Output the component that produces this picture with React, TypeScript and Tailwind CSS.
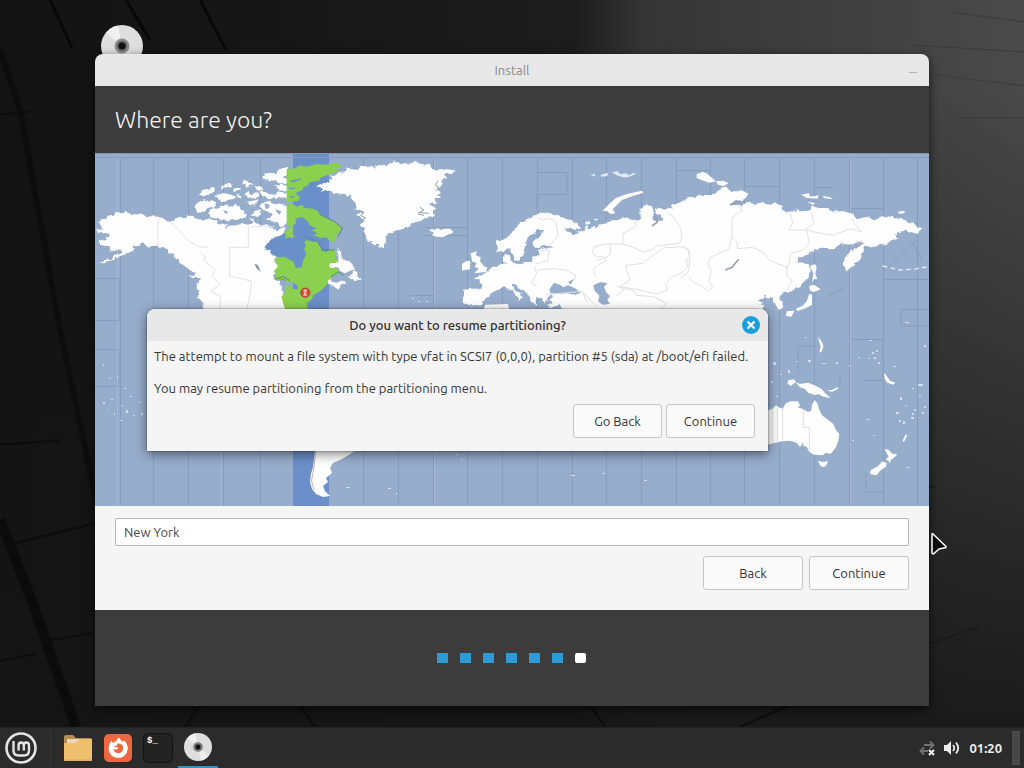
import React from "react";

const ZONE_LINES = [120, 153, 188, 223, 260, 363, 398, 433, 467, 502, 537, 572, 606, 641, 676, 710, 744, 779, 814, 849, 883, 917];

/* Small islands, as [x, y, width, height] */
const ISLANDS: number[][] = [
  [103, 364, 1, 2], [109, 378, 2, 1], [117, 376, 1, 2], [124, 388, 2, 1], [103, 402, 2, 2], [111, 399, 2, 1],
  [114, 413, 1, 2], [121, 405, 2, 1], [126, 410, 2, 3], [133, 415, 2, 1], [139, 401, 1, 2], [130, 396, 2, 1],
  [120, 420, 2, 1], [141, 413, 2, 2], [107, 409, 1, 1], [412, 298, 2, 1], [418, 301, 2, 1], [426, 301, 2, 1],
  [773, 362, 3, 3], [780, 374, 2, 1], [788, 370, 2, 3], [796, 361, 2, 1], [805, 337, 2, 1], [808, 360, 3, 2],
  [822, 363, 4, 1], [836, 362, 2, 2], [849, 365, 2, 1], [858, 357, 2, 1], [868, 358, 2, 1], [872, 352, 2, 2],
  [876, 350, 2, 2], [874, 357, 2, 2], [878, 362, 2, 2], [869, 340, 3, 1], [882, 361, 1, 1], [893, 366, 3, 1],
  [905, 322, 4, 1], [924, 345, 2, 2], [900, 397, 2, 3], [896, 412, 3, 2], [903, 421, 2, 3], [911, 417, 3, 2],
  [912, 413, 2, 2], [924, 406, 2, 2], [919, 395, 2, 1], [922, 412, 2, 2], [912, 388, 2, 1], [866, 419, 3, 1],
  [918, 384, 5, 2], [914, 409, 2, 2], [899, 420, 2, 2], [905, 405, 2, 1], [771, 381, 2, 2], [776, 396, 2, 1],
  [873, 435, 2, 1], [852, 440, 2, 1], [907, 467, 3, 1], [883, 467, 1, 1], [571, 475, 4, 1], [602, 473, 3, 1],
  [644, 480, 3, 1], [461, 459, 2, 1], [456, 454, 2, 1], [346, 487, 4, 1], [388, 488, 3, 1], [396, 493, 2, 1],
];

const CRUST = "#fefefe";
const SEA = "#97adcc";

function WorldMap() {
  return (
    <svg viewBox="95 153 834 353" className="block h-auto w-full" role="img" aria-label="Time zone map">
      <defs>
        <filter id="coast" x="-5%" y="-5%" width="110%" height="110%">
          <feTurbulence type="fractalNoise" baseFrequency=".06" numOctaves="2" seed="4" result="noise" />
          <feDisplacementMap in="SourceGraphic" in2="noise" scale="16" xChannelSelector="R" yChannelSelector="G" />
        </filter>
      </defs>
      <rect x="95" y="153" width="834" height="353" fill={SEA} />
      <rect x="293" y="153" width="36" height="353" fill="#6b8fc8" />
      <g stroke="#879dbd" strokeWidth="1" fill="none">
        {ZONE_LINES.map((x) => (
          <path key={x} d={`M${x + 0.5} 157V506`} />
        ))}
        <path d="M95 278.500H119V320.500H95M95 349.500H119V386.500H95M95 157.500H929M537 172.500H567V194.500H537V210M676 170.500H710M744 186.500H779M814 187.500H833M883 208.500H849M929 279.500H884M901 309.500H929M901 309V326H929M798 372V346H816M849 339.500H883V380.500H862M840 372V388M425 227.500H467M866 472V492H883M425 235.500H467M410 295.500H433M888 268L913 243L922 260M845 287L826 297" />
      </g>
      <g stroke="#a5b7d2" strokeWidth="1">
        <path d="M117.500 157V506M221.500 400V506M850.500 157V506M434.500 157V506" />
      </g>
      {/* North America */}
      <g transform="translate(95 150) scale(.33333)">
        <path fill="#6b8fc8" d="M598 270L560 245L548 262L520 272L510 295L530 310L550 320L545 350L540 385L600 400L650 380Z" />
        <g filter="url(#coast)">
          <path fill={CRUST} d="M4 235L26 238L18 222L12 212L32 208L40 198L60 192L70 186L84 190L88 182L110 192L140 194L160 199L190 200L206 208L225 214L242 206L256 200L270 206L280 196L292 202L312 204L322 212L345 206L370 214L368 222L400 220L388 234L412 228L440 222L460 228L475 216L490 224L510 222L526 230L548 244L566 232L572 240L560 256L540 262L520 272L512 288L512 300L528 304L530 316L545 320L540 340L550 345L546 362L534 376L540 392L555 395L558 410L562 430L570 440L575 455L575 495L330 495L325 460L312 445L312 425L305 412L308 395L318 385L302 384L280 372L298 376L300 365L282 360L270 345L256 340L250 326L242 328L235 312L222 308L215 296L200 295L180 286L160 290L145 280L130 288L112 290L120 296L100 312L78 316L60 330L36 334L10 342L30 330L56 324L66 312L82 303L60 300L45 304L40 288L15 286L14 274L45 262L44 254L35 250L8 248Z" />
          <path fill={CRUST} d="M298 170L306 158L328 150L350 152L364 160L356 172L340 172L330 184L310 188L306 178ZM310 136L330 118L352 114L364 122L350 130L336 138ZM362 142L370 128L390 130L416 138L422 146L396 150L380 154ZM345 178L370 172L392 164L412 170L424 160L440 178L456 196L444 208L420 206L400 214L370 208L346 202L340 190ZM386 104L404 98L410 104L396 112L378 118ZM438 94L460 94L478 106L458 108ZM446 128L458 120L466 136L480 126L492 132L488 144L460 146ZM452 152L468 154L490 150L488 162L470 168ZM478 112L500 110L508 120L490 122ZM500 78L520 68L540 70L556 56L578 54L582 72L560 82L582 88L580 102L552 100L540 92L522 90L510 84ZM540 108L560 104L582 110L582 120L556 122ZM496 124L516 122L520 132L540 134L552 126L582 128L584 144L556 146L542 142L520 148L500 138ZM500 158L520 152L534 162L560 164L582 172L584 192L576 224L556 232L548 216L526 214L512 206L532 200L524 188L508 182L490 170ZM476 184L496 178L502 192L484 200L470 196ZM424 132L438 136L434 146ZM414 116L434 112L440 120L422 124ZM458 206L480 206L476 214Z" />
        </g>
        <path fill={SEA} d="M508 160L524 164L522 174L512 178ZM400 186L384 180L392 192ZM540 178L560 184L552 194Z" />
        <path fill="none" stroke="#e2e2e5" strokeWidth="3" d="M189 206V288M225 214L250 240L280 272L312 290L340 292M318 310L330 320L328 332L360 360L352 380L376 402L346 424L376 438V480M460 230V292H404V378L440 386L470 394L466 430L454 480M464 230H540" />
        <path fill="#8c9399" d="M478 342L488 344L498 366L486 356Z" />
      </g>
      <g transform="translate(270 150) scale(.33333)">
        <path fill="#8bd04e" d="M50 56L72 56L90 46L110 50L140 42L168 44L200 38L218 50L198 58L208 64L180 72L150 84L148 92L120 96L112 108L100 112L98 120L75 130L90 140L86 152L50 155ZM50 168L64 158L80 170L96 164L104 174L130 176L145 184L150 195L166 198L180 210L196 216L216 232L208 246L200 254L198 272L186 276L168 262L152 264L130 256L142 250L125 240L140 236L120 226L112 212L95 200L76 206L78 220L68 228L60 222L70 238L66 250L76 260L60 262L44 266L48 254L42 248L60 235L50 218ZM20 322L44 320L60 330L70 334L78 355L95 352L100 330L110 312L102 298L108 286L102 276L112 270L128 276L140 274L150 288L156 302L170 306L180 296L192 298L200 308L196 324L206 336L176 344L200 354L210 372L192 376L180 388L170 405L152 422L130 436L126 448L110 460L116 490L50 490L40 462L34 440L45 430L44 412L58 404L66 416L84 418L82 406L66 396L50 398L44 386L30 388L10 388L18 378L12 362L24 350L16 336Z" />
        <path fill="#6b8fc8" d="M62 92L96 84L90 90L64 98ZM52 116L78 112L70 118ZM84 222L106 216L122 236L104 232ZM54 140L74 138L66 144Z" />
        <path fill="none" stroke="#587caa" strokeWidth="3" d="M150 193L192 214L218 234L204 260M14 388L40 380L60 392M106 260L142 274L158 300L194 300M184 380L205 366L220 376" />
        <g filter="url(#coast)">
          <path fill={CRUST} d="M200 300L206 298L214 310L214 324L232 334L246 344L256 358L240 362L225 370L212 364L204 352L180 350L176 344L204 338L206 322ZM234 380L246 374L250 364L262 370L262 378L272 392L260 392L248 388ZM172 388L186 384L190 396L202 398L218 390L226 398L214 406L204 416L188 412L176 402Z" />
          <path fill={CRUST} d="M138 108L160 100L182 96L172 88L190 82L176 78L210 66L222 68L230 54L262 56L280 48L312 52L330 42L352 46L372 34L400 40L436 36L450 44L480 48L500 62L530 58L556 62L544 70L525 72L530 84L512 90L520 104L500 114L516 124L500 134L512 146L488 148L506 156L480 164L496 176L490 186L496 196L470 204L450 214L432 218L410 234L394 234L370 246L352 256L346 274L338 292L322 284L312 286L298 272L290 264L286 250L276 244L284 232L272 226L282 214L270 204L262 192L284 186L260 176L258 162L248 152L240 138L224 132L200 130L182 126L150 124L166 116Z" />
        </g>
        <path fill="none" stroke="#8da3a9" strokeWidth="3" d="M268 184L282 188L272 196L286 204L274 212M504 92L496 106L508 112L496 124M450 172L462 180L446 188L476 190M444 192L462 196" />
        <path fill={CRUST} d="M476 240L492 236L490 242L504 234L512 240L524 236L540 236L550 246L534 254L518 262L500 260L486 256L492 248ZM575 350L588 345L590 334L600 332V358L584 360ZM582 422L600 416V465L582 458Z" />
        <circle cx="106" cy="428" r="14" fill="#e54532" />
        <circle cx="106" cy="428" r="14" fill="none" stroke="#8d6142" strokeWidth="3" />
        <path d="M99 417h13v7l-3 4l3 5v6h-13v-6l3-5l-3-4z" fill="#f1b6a8" stroke="#d52820" strokeWidth="2" />
      </g>
      {/* Europe and Asia */}
      <g transform="translate(450 150) scale(.33333)">
        <path filter="url(#coast)" fill={CRUST} d="M42 420L60 416L92 416L94 402L84 392L72 384L90 378L102 372L114 366L130 350L148 346L165 340L172 344L160 332L158 322L168 312L180 316L178 328L188 338L200 345L220 340L244 338L248 326L252 316L270 316L262 300L278 296L310 292L290 286L262 292L250 288L248 276L262 262L276 250L276 240L262 240L252 250L234 262L224 276L230 288L222 300L220 316L208 332L194 332L188 316L182 298L165 300L148 306L140 292L142 274L160 268L176 262L188 244L210 222L232 204L246 200L262 192L280 188L300 190L314 196L330 200L350 206L370 214L386 222L390 234L368 238L340 234L350 246L368 254L386 250L382 242L404 240L408 228L418 238L440 228L462 224L476 212L500 214L520 200L546 206L562 212L572 204L568 188L572 176L590 160L606 172L612 192L606 208L620 214L640 210L638 202L620 190L614 176L630 170L640 182L652 172L668 180L662 162L684 158L705 150L712 142L740 140L750 134L786 136L800 130L806 118L820 112L838 116L846 124L870 124L892 132L884 148L860 152L838 166L872 164L900 158L916 164L940 160L964 166L978 160L998 168L998 180L1012 188L1024 182L1060 184L1080 178L1090 170L1110 178L1130 176L1150 184L1180 184L1210 192L1216 204L1250 202L1280 208L1306 198L1334 202L1362 206L1380 220L1398 226L1420 238L1400 252L1390 244L1374 250L1366 238L1360 246L1334 252L1346 266L1320 274L1310 282L1270 288L1240 292L1244 306L1236 310L1234 322L1220 332L1208 350L1190 366L1182 348L1182 330L1196 308L1220 290L1240 272L1226 276L1200 284L1184 282L1160 286L1152 298L1110 296L1090 302L1078 312L1050 322L1042 336L1060 338L1080 344L1082 364L1072 388L1050 412L1020 422L1000 430L988 436L996 454L1000 474L982 476L978 460L970 452L968 438L946 446L948 436L924 452L940 458L926 466L944 464L930 490L350 490L330 466L310 472L294 468L304 456L294 446L286 466L270 440L258 444L262 464L248 456L236 436L212 420L198 404L188 406L190 418L210 428L222 444L214 442L210 454L200 440L178 416L164 412L150 416L134 426L124 436L106 440L98 458L82 466L60 466L38 458L44 440Z" />
        <path fill={SEA} d="M298 418L312 398L330 404L340 412L354 406L374 414L392 428L376 434L350 430L326 432L302 430ZM430 406L452 396L472 400L462 410L468 426L480 438L472 450L480 462L458 464L444 454L448 438L434 422ZM354 396L372 386L362 404ZM290 446L302 434L310 438L298 450Z" />
        <path fill={CRUST} d="M62 310L80 304L78 316L92 322L90 334L104 350L112 352L108 366L72 370L86 356L74 350L80 340L66 334ZM36 342L50 332L62 336L56 356L36 362ZM458 182L480 160L498 144L530 132L576 122L580 128L542 140L516 150L500 166L488 178L496 190L482 192L472 184ZM405 216L420 214L420 222L408 224ZM430 206L446 208L438 212ZM0 60L18 64L0 70ZM0 236L10 246L0 254ZM740 72L758 66L770 70L786 84L798 94L778 98L760 92L740 84ZM798 94L820 92L836 100L820 108L804 104ZM1054 134L1076 130L1082 140L1106 136L1102 146L1070 144ZM1118 138L1140 142L1150 148L1122 144ZM1072 156L1096 158L1090 166L1080 160ZM1342 186L1360 182L1366 188L1350 192ZM1080 348L1094 342L1100 350L1096 372L1102 386L1092 388L1086 400L1090 370ZM1078 408L1092 404L1112 418L1092 426L1080 422ZM1078 432L1086 434L1086 464L1068 474L1042 484L1038 476L1060 466L1070 454ZM1034 482L1024 500L1008 498L1010 484ZM106 464L174 462L178 480H100Z" />
        <path fill="#dfe8f3" d="M420 74L436 72L434 80ZM452 74L474 68L472 78L454 80ZM486 66L504 64L510 72L530 70L536 76L552 68L558 72L534 82L520 82L500 76Z" />
        <path fill="none" stroke="#e0e0e3" strokeWidth="3" d="M262 204L280 210L296 204L318 214L324 258L300 286M256 342L294 332L298 300L270 304M254 350L260 370L244 400L262 410M262 360L310 356L346 360L378 376L372 392M442 290L426 300L436 322L460 318L470 330L440 348L430 362L436 382M430 290L470 282L518 282L520 250L560 228L552 206M440 332L472 320L482 308L480 282M518 282L550 292L580 306L610 298L620 288L690 280L696 254L690 230L670 200L654 190M690 290L712 296L720 322L708 330L714 350L696 368L662 384L648 400L652 420L620 432L570 420L510 410L540 390L530 360L528 346L580 340L590 330L640 294L690 290M510 410L550 422L560 436L610 440L650 460L630 480M700 290L718 300L718 352L712 370L692 384M716 380L730 396L756 410L776 424L788 410L776 392L784 364L774 340L782 322L810 308L836 298L846 262L846 204L876 180L862 166M846 262L860 276L864 296L908 292L940 308L960 332L990 344L1010 350M1010 360L1020 330L1020 312L1060 300L1078 280L1070 240L1016 240L1028 220L1020 186M1070 240L1100 248L1150 256L1200 236L1236 246L1220 230L1206 206M1062 240L1092 220L1084 186M1010 350L1012 380L1026 392L1012 420M288 434L396 424L420 450L440 470M400 430L410 458M500 408L522 418L500 438" />
        <path fill="none" stroke="#9aa0a7" strokeWidth="5" d="M826 360L846 352L866 328M606 228L622 216L616 200M840 164L872 154M1216 294L1240 278" />
        <path stroke="#e5edf6" strokeWidth="4" strokeDasharray="14 10" fill="none" d="M1298 348L1350 360L1390 358L1434 350" />
      </g>
      {/* Oceania */}
      <g transform="translate(740 320) scale(.33333)">
        <path fill={CRUST} d="M60 290L85 270L98 266L108 256L116 262L128 266L138 250L152 244L174 244L180 256L174 262L190 268L204 276L214 272L216 254L224 240L232 250L238 270L246 286L262 298L280 312L288 330L298 342L296 360L288 382L272 402L258 398L248 406L222 404L208 396L200 380L190 378L190 366L180 382L170 368L150 362L126 364L100 370L60 380ZM234 422L248 426L264 424L258 438L248 442L240 436ZM166 186L180 192L204 188L224 196L246 208L254 218L272 234L250 230L236 222L226 226L204 218L196 208L180 202ZM262 210L276 210L296 200L292 208L274 216ZM146 180L162 178L168 186L152 198L142 190ZM234 52L242 60L250 76L246 94L238 98L242 80ZM432 158L442 170L450 182L466 188L460 194L442 188L434 176ZM434 386L446 390L458 402L472 402L464 412L452 420L450 430L438 418L446 410ZM428 424L440 430L438 440L420 452L410 466L390 462L392 450L412 440ZM488 362L496 344L502 346L492 366Z" />
        <path stroke="#d0d0d0" strokeWidth="2" fill="none" d="M98 266V370M112 262V366M128 262V362M190 268V322H208V394" />
        <path fill="#7ad36e" d="M440 420L448 424L442 430Z" />
      </g>
      {/* Tip of South America */}
      <path fill={CRUST} d="M315 450L314 459L313 467L311 474L310 482L312 489L316 494L323 497L330 496L325 491L323 486L328 482L326 478L332 473L330 468L333 463L340 460L347 456L356 450Z" />
      <path fill="none" stroke="#c9b3ac" d="M315.500 452L314 467L311.500 481L314 490" />
      {ISLANDS.map(([x, y, w, h], i) => (
        <rect key={i} x={x} y={y} width={w} height={h} rx=".5" fill="#d6e1ef" />
      ))}
      <rect x="95" y="153" width="834" height="1" fill="#8696af" />
    </svg>
  );
}

function Disc({ className }: { className: string }) {
  return (
    <svg viewBox="0 0 42 42" className={className} aria-hidden="true">
      <circle cx="21" cy="21" r="21" fill="#dedede" />
      <path d="M21 21L5 8A21 21 0 0 1 17 .5Z" fill="#f0f0f0" />
      <path d="M21 21L37 34A21 21 0 0 1 25 41.500Z" fill="#ededed" />
      <circle cx="21" cy="21" r="7.500" fill="#8d8d8d" />
      <circle cx="21" cy="21" r="5" fill="#555" />
      <circle cx="21" cy="21" r="3.300" fill="#111" />
    </svg>
  );
}

function Wallpaper() {
  return (
    <svg viewBox="0 0 1024 728" preserveAspectRatio="none" className="absolute inset-0 h-full w-full" aria-hidden="true">
      <defs>
        <linearGradient id="wall" x1="0" y1="0" x2="1" y2="0">
          <stop offset="0" stopColor="#131313" />
          <stop offset=".3" stopColor="#171717" />
          <stop offset=".56" stopColor="#1c1c1c" />
          <stop offset=".63" stopColor="#353535" />
          <stop offset="1" stopColor="#4a4a4a" />
        </linearGradient>
        <linearGradient id="shade" x1="0" y1="0" x2="0" y2="1">
          <stop offset=".1" stopColor="#151515" stopOpacity="0" />
          <stop offset=".7" stopColor="#151515" stopOpacity=".6" />
          <stop offset="1" stopColor="#151515" stopOpacity=".9" />
        </linearGradient>
      </defs>
      <rect width="1024" height="728" fill="url(#wall)" />
      <rect width="1024" height="728" fill="url(#shade)" />
      <g stroke="#080808" fill="none">
        <path d="M0 50L20 110L60 330L96 500" strokeWidth="6" opacity=".6" />
        <path d="M0 520L35 610L76 728" strokeWidth="10" opacity=".75" />
        <path d="M50 0L72 48M126 0L150 40M200 0L226 50" strokeWidth="3" />
        <path d="M0 445L60 441M10 545L92 525M0 662L35 655M50 641L92 634M0 115L30 112M185 728L200 706M300 706L315 728M590 706L605 728M740 728L790 706" strokeWidth="2" opacity=".7" />
        <path d="M929 645L980 627M929 488L936 487" stroke="#151515" strokeWidth="1" />
      </g>
      <path d="M950 12L1024 22M910 45L1024 52M935 75L1024 86M960 118H1024" stroke="#3a3a3a" fill="none" />
    </svg>
  );
}

function MintLogo() {
  return (
    <svg viewBox="0 0 34 34" className="size-[34px]" fill="none" stroke="#e4e4e4" aria-hidden="true">
      <circle cx="17" cy="17" r="14.500" strokeWidth="2.600" />
      <path d="M9.500 10V19.500Q9.500 24.500 14.500 24.500H20Q25 24.500 25 19.500V14.500Q25 11.500 22.400 11.500Q19.800 11.500 19.800 14.500V19.500M19.800 14.500Q19.800 11.500 17.200 11.500Q14.600 11.500 14.600 14.500V19.500" strokeWidth="2.400" />
    </svg>
  );
}

function Folder() {
  return (
    <svg viewBox="0 0 28 26" className="h-[26px] w-7" aria-hidden="true">
      <path d="M0 2Q0 0 2 0H9L12 3H26Q28 3 28 5V12H0Z" fill="#b68d50" />
      <path d="M3 4H25V9H3Z" fill="#e8d8b8" />
      <path d="M0 8H11L16 4H28V25Q28 26 27 26H1Q0 26 0 25Z" fill="#eebf6c" />
      <path d="M0 25H28" stroke="#d9a650" />
    </svg>
  );
}

function Firefox() {
  return (
    <svg viewBox="0 0 28 28" className="size-7" aria-hidden="true">
      <rect width="28" height="28" rx="5" fill="#ed6842" />
      <path d="M14 24A9.500 9.500 0 0 1 4.500 14.500Q4.500 10 7.500 6.500L8.500 9Q10 7.500 12 7.500Q12.500 5 15.500 3.500Q16 6 19 8L20 6.500Q24 10 23.700 15A9.600 9.600 0 0 1 14 24Z" fill="#fff" />
      <path d="M13.500 9.500Q17.500 9 18.800 12Q20 15.500 17.500 18Q14.500 20.200 11.500 18.500Q9.500 17.200 9.300 15Q10.500 16 12.500 15.600Q14.500 15 14.200 13.500L10.500 13Q10 11.500 13 11.500Z" fill="#ed6842" />
    </svg>
  );
}

const BUTTON = "h-[34px] rounded-[3px] border border-[#c6c6c6] bg-[#fafafa] text-[13px] leading-4 text-[#353535]";

export default function App() {
  return (
    <div className="flex min-h-screen flex-col overflow-hidden bg-[#151515] font-['Ubuntu','Noto_Sans',sans-serif] text-[13px] leading-4 text-[#353535]">
      <main className="relative flex-1 px-[95px] pt-[54px] pb-[21px]">
        <Wallpaper />
        <Disc className="absolute top-[25px] left-[101px] size-[42px]" />

        <section className="relative rounded-t-lg shadow-[0_3px_10px_rgba(0,0,0,0.7)]" aria-label="Install">
          <header className="grid h-8 grid-cols-[1fr_auto_1fr] items-center rounded-t-lg bg-[#e8e8e8] px-3 text-[#8a8a8a]">
            <span />
            <h1>Install</h1>
            <button aria-label="Minimize" className="flex h-4 w-2 items-end justify-self-end pb-[5px]">
              <span className="h-px w-full bg-[#b5b5b5]" />
            </button>
          </header>

          <div className="flex h-[67px] items-center bg-[#3c3c3c] px-5">
            <h2 className="text-[23px] leading-8 font-light text-[#f2f2f2]">Where are you?</h2>
          </div>

          <WorldMap />

          <form className="bg-[#f5f5f5] px-5 pt-3 pb-5" onSubmit={(e) => e.preventDefault()}>
            <input
              aria-label="Location"
              defaultValue="New York"
              className="block h-7 w-full rounded-[2px] border border-[#bcbcbc] bg-white px-2 text-[13px] leading-4 text-[#454545] outline-none"
            />
            <div className="mt-2.5 flex justify-end gap-1.5">
              <button type="button" className={`${BUTTON} w-[100px]`}>Back</button>
              <button type="submit" className={`${BUTTON} w-[100px]`}>Continue</button>
            </div>
          </form>

          <footer className="flex h-24 items-center justify-center gap-3 bg-[#3c3c3c] pr-0.5">
            {[1, 2, 3, 4, 5, 6].map((step) => (
              <span key={step} className="h-2.5 w-[11px] bg-[#2d9ad5]" />
            ))}
            <span className="h-2.5 w-[11px] rounded-[2px] bg-white" />
          </footer>

          <div
            role="dialog"
            aria-labelledby="dialog-title"
            className="absolute top-[255px] left-[52px] w-[621px] rounded-t-lg bg-[#f5f5f5] shadow-[0_3px_12px_rgba(0,0,0,0.5),0_0_2px_rgba(0,0,0,0.55)]"
          >
            <header className="grid h-8 grid-cols-[1fr_auto_1fr] items-center rounded-t-lg bg-[#e8e8e8] px-2">
              <span />
              <h2 id="dialog-title" className="font-medium text-[#303030]">Do you want to resume partitioning?</h2>
              <button aria-label="Close" className="size-[18px] justify-self-end rounded-full bg-[#1f9ede]">
                <svg viewBox="0 0 18 18" className="size-full" stroke="#fff" strokeWidth="2.200" aria-hidden="true">
                  <path d="M5.500 5.500L12.500 12.500M12.500 5.500L5.500 12.500" />
                </svg>
              </button>
            </header>
            <div className="px-[7px] pt-[7px]">
              <p className="whitespace-nowrap">
                The attempt to mount a file system with type vfat in SCSI7 (0,0,0), partition #5 (sda) at /boot/efi failed.
              </p>
              <p className="mt-4">You may resume partitioning from the partitioning menu.</p>
            </div>
            <div className="flex justify-end gap-1 px-[13px] pt-2 pb-[13px]">
              <button className={`${BUTTON} w-[89px]`}>Go Back</button>
              <button className={`${BUTTON} w-[89px]`}>Continue</button>
            </div>
          </div>
        </section>

        <svg viewBox="0 0 18 24" className="absolute top-[532px] right-[76px] h-6 w-[18px]" aria-hidden="true">
          <path d="M2 2Q2 1 3 2L16 14.500Q16.500 15.500 15 15.800L9 17L4 21.500Q2 22.500 2 20.500Z" fill="#0c0c0c" stroke="#fff" strokeWidth="1.500" strokeLinejoin="round" />
        </svg>
      </main>

      <nav className="relative flex h-[41px] items-center justify-between border-t border-[#222] bg-[#2b2b2b] pl-1" aria-label="Panel">
        <div className="flex h-full items-center">
          <button aria-label="Menu"><MintLogo /></button>
          <span className="mr-[7px] ml-3 h-9 w-px bg-[#363636]" />
          <div className="flex h-full items-center">
            <button aria-label="Files" className="grid h-full w-10 place-items-center"><Folder /></button>
            <button aria-label="Firefox" className="grid h-full w-10 place-items-center"><Firefox /></button>
            <button aria-label="Terminal" className="grid h-full w-10 place-items-center">
              <svg viewBox="0 0 30 30" className="size-[30px]" aria-hidden="true">
                <rect x=".500" y=".500" width="29" height="29" rx="5" fill="#232323" stroke="#111" />
                <text x="4" y="10" fontSize="9" fontWeight="700" fontFamily="Liberation Mono, monospace" fill="#fff">$_</text>
              </svg>
            </button>
            <button aria-label="Install" className="grid h-full w-10 place-items-center border-b-2 border-[#2a94cc]">
              <Disc className="size-7" />
            </button>
          </div>
        </div>
        <div className="flex h-full items-center text-[#eee]">
          <svg viewBox="0 0 16 16" className="mr-2 size-4" fill="none" aria-hidden="true">
            <path d="M5 5H14M11 1.500L14.500 5L11 8.500M9 11H2M5 7.500L1.500 11L5 14.500" stroke="#727272" strokeWidth="1.800" />
            <path d="M10 10L15 15M15 10L10 15" stroke="#f2f2f2" strokeWidth="2" />
          </svg>
          <svg viewBox="0 0 18 16" className="mr-2 h-4 w-[18px]" fill="none" stroke="#e8e8e8" strokeWidth="1.800" aria-hidden="true">
            <path d="M1 5H4L8 1V15L4 11H1Z" fill="#eee" stroke="none" />
            <path d="M10 5Q12.500 8 10 11" />
            <path d="M13 2.500Q17.500 8 13 13.500" />
          </svg>
          <time className="text-[13px] font-semibold">01:20</time>
          <span className="mr-1 ml-2.5 h-[34px] w-2 bg-[#484848]" />
        </div>
      </nav>
    </div>
  );
}
